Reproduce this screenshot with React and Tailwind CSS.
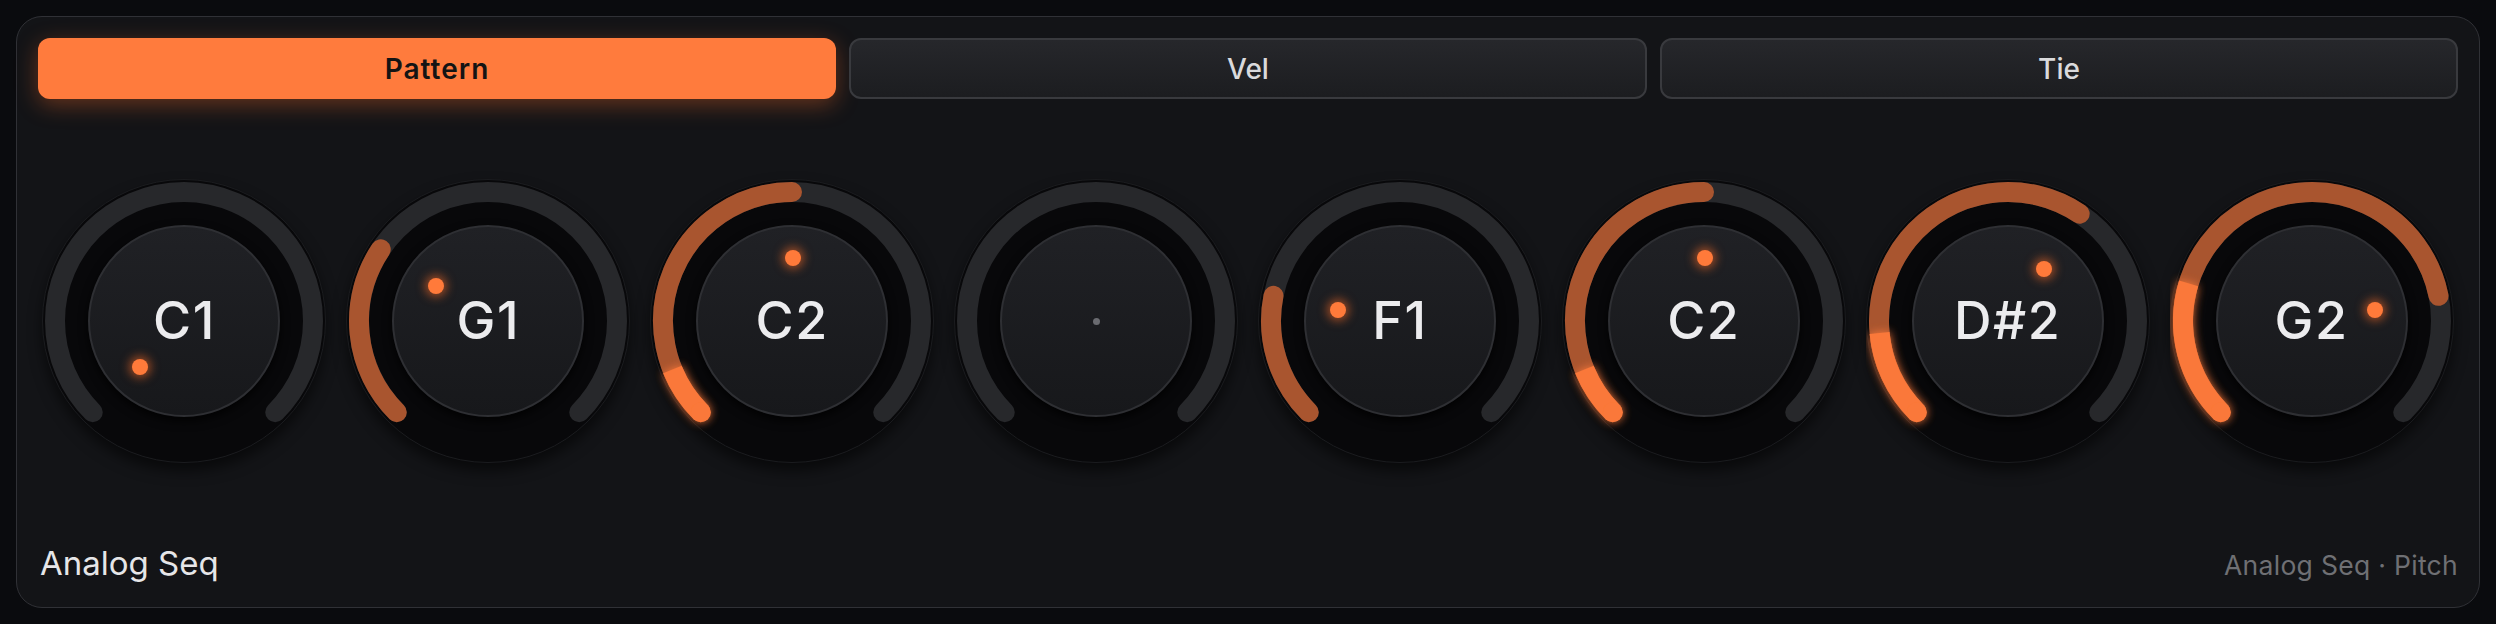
import React from 'react';

const TABS = ['Pattern', 'Vel', 'Tie'];

// pitch steps, semitones above C1 (range 0..24), null = rest
const STEPS = [
  { note: 'C1', semi: 0 },
  { note: 'G1', semi: 7 },
  { note: 'C2', semi: 12 },
  { note: null, semi: null },
  { note: 'F1', semi: 5 },
  { note: 'C2', semi: 12 },
  { note: 'D#2', semi: 15 },
  { note: 'G2', semi: 19 },
];

const SIZE = 284;
const C = SIZE / 2;
const R = 129;

const pt = (deg, r) => {
  const a = (deg * Math.PI) / 180;
  return [C + r * Math.sin(a), C - r * Math.cos(a)];
};

const arc = (from, to, r) => {
  const [x1, y1] = pt(from, r);
  const [x2, y2] = pt(to, r);
  const large = to - from > 180 ? 1 : 0;
  return `M ${x1} ${y1} A ${r} ${r} 0 ${large} 1 ${x2} ${y2}`;
};

function Knob({ note, semi }) {
  const rest = semi === null;
  const sweep = rest ? 0 : (semi / 24) * 270;
  const end = -135 + sweep;
  const hot = Math.max(0, 0.495 * (sweep - 88.6));
  const [dx, dy] = pt(end, 64);
  const [sx, sy] = pt(-135, R);

  return (
    <div className="relative w-[284px] h-[284px] rounded-full bg-[#08080a] border border-[#1b1c1f] shadow-[0_8px_14px_rgba(0,0,0,0.55)]">
      <svg className="absolute inset-[-1px]" width={SIZE} height={SIZE} viewBox={`0 0 ${SIZE} ${SIZE}`}>
        <defs>
          <filter id="glow" x="-50%" y="-50%" width="200%" height="200%">
            <feGaussianBlur stdDeviation="5" result="b" />
            <feMerge>
              <feMergeNode in="b" />
              <feMergeNode in="SourceGraphic" />
            </feMerge>
          </filter>
        </defs>
        <path d={arc(-135, 135, R)} fill="none" stroke="#27282b" strokeWidth="20" strokeLinecap="round" />
        {sweep > 0 && (
          <path d={arc(-135, end, R)} fill="none" stroke="#a9552f" strokeWidth="20" strokeLinecap="round" />
        )}
        {hot > 0 && (
          <g filter="url(#glow)" opacity="0.95">
            <path d={arc(-135, -135 + hot, R)} fill="none" stroke="#ff7a3a" strokeWidth="20" strokeLinecap="butt" />
            <circle cx={sx} cy={sy} r="10" fill="#ff7a3a" />
          </g>
        )}
      </svg>

      <div className="absolute left-1/2 top-1/2 -translate-x-1/2 -translate-y-1/2 w-[192px] h-[192px] rounded-full bg-gradient-to-b from-[#202125] to-[#17181b] border-2 border-[#2e2f33] shadow-[0_4px_10px_rgba(0,0,0,0.8)] flex items-center justify-center">
        {rest ? (
          <div className="w-[7px] h-[7px] rounded-full bg-[#6a6b70]" />
        ) : (
          <span className="text-[52px] leading-none font-medium text-[#ececee] tracking-[1.5px]">{note}</span>
        )}
      </div>

      {!rest && (
        <div
          className="absolute w-[16px] h-[16px] rounded-full bg-[#ff7a3a] shadow-[0_0_10px_3px_rgba(255,110,40,0.55)]"
          style={{ left: dx - 8, top: dy - 8 }}
        />
      )}
    </div>
  );
}

export default function App() {
  const active = 'Pattern';

  return (
    <div className="w-[2496px] h-[624px] bg-[#0a0b0e] p-4" style={{ fontFamily: 'Inter, "Noto Sans", sans-serif' }}>
      <div className="h-full rounded-[26px] border border-[#303136] bg-[#131417] px-[21px] pt-[21px] pb-[27px] flex flex-col">
        <div className="grid grid-cols-3 gap-[13px]">
          {TABS.map(t => (
            <button
              key={t}
              className={`h-[61px] rounded-[12px] text-[28px] ${
                t === active
                  ? 'bg-[#ff7b3d] text-[#141414] font-semibold tracking-[1px] shadow-[0_6px_22px_rgba(255,110,40,0.35)]'
                  : 'bg-gradient-to-b from-[#26272b] to-[#1c1d20] border-2 border-[#393a3e] text-[#dadadc] font-medium'
              }`}
            >
              {t}
            </button>
          ))}
        </div>

        <div className="grid grid-cols-8 gap-x-[11px] mt-[80px] justify-items-center">
          {STEPS.map((s, i) => (
            <Knob key={i} note={s.note} semi={s.semi} />
          ))}
        </div>

        <div className="mt-auto flex items-baseline justify-between pl-[2px]">
          <span className="text-[33px] leading-none text-[#e6e6e8]">Analog Seq</span>
          <span className="text-[26.5px] leading-none text-[#6f7074] tracking-[0.3px]">Analog Seq · Pitch</span>
        </div>
      </div>
    </div>
  );
}
